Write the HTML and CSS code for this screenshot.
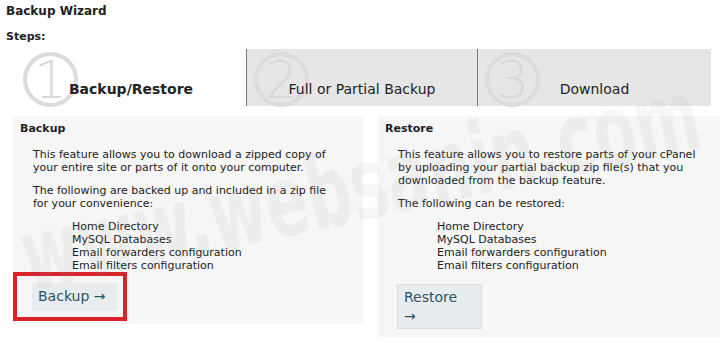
FILE: index.html
```html
<!DOCTYPE html>
<html lang="en">

<head>
    <meta charset="UTF-8">
    <meta name="viewport" content="width=device-width, initial-scale=1.0">
    <title>Backup Wizard</title>
    <link rel="stylesheet" href="styles.css">
</head>

<body>

    <h1 class="title">Backup Wizard</h1>
    <div class="steps-label">Steps:</div>

    <div class="tabs">
        <div class="tab active">
            <span class="num">1</span>
            <span class="tab-label">Backup/Restore</span>
        </div>
        <div class="tab">
            <span class="num">2</span>
            <span class="tab-label">Full or Partial Backup</span>
        </div>
        <div class="tab">
            <span class="num">3</span>
            <span class="tab-label">Download</span>
        </div>
    </div>

    <div class="panels">
        <div class="panel backup">
            <h2>Backup</h2>
            <p>This feature allows you to download a zipped copy of your entire site or parts of it onto your computer.</p>
            <p>The following are backed up and included in a zip file for your convenience:</p>
            <ul>
                <li>Home Directory</li>
                <li>MySQL Databases</li>
                <li>Email forwarders configuration</li>
                <li>Email filters configuration</li>
            </ul>
            <div class="highlight">
                <button class="btn">Backup &rarr;</button>
            </div>
        </div>

        <div class="panel restore">
            <h2>Restore</h2>
            <p>This feature allows you to restore parts of your cPanel by uploading your partial backup zip file(s) that you downloaded from the backup feature.</p>
            <p>The following can be restored:</p>
            <ul>
                <li>Home Directory</li>
                <li>MySQL Databases</li>
                <li>Email forwarders configuration</li>
                <li>Email filters configuration</li>
            </ul>
            <button class="btn narrow">Restore &rarr;</button>
        </div>
    </div>

    <div class="watermark">www.websanin.com</div>

</body>

</html>
```

FILE: styles.css
```css
body {
    margin: 0;
    padding: 3px 6px 0 6px;
    background: #fff;
    font-family: "DejaVu Sans", Verdana, sans-serif;
    font-size: 11px;
    color: #222;
    position: relative;
    overflow: hidden;
    height: 343px;
}

.title {
    font-size: 12px;
    font-weight: bold;
    margin: 0;
    line-height: 16px;
}

.steps-label {
    font-size: 11px;
    font-weight: bold;
    margin-top: 11px;
    line-height: 14px;
}

.tabs {
    display: flex;
    margin: 5px 9px 0 10px;
    height: 57px;
}

.tab {
    position: relative;
    flex: 0 0 231px;
    background: #e6e6e6;
    border-left: 1px solid #777;
    display: flex;
    align-items: flex-end;
    justify-content: center;
    padding-bottom: 9px;
    box-sizing: border-box;
}

.tab.active {
    flex-basis: 230px;
    background: #fff;
    border-left: none;
}

.tab:last-child {
    flex: 1;
}

.num {
    position: absolute;
    left: 7px;
    top: 3px;
    width: 47px;
    height: 47px;
    border: 4px solid #dcdcdc;
    border-radius: 50%;
    color: #d8d8d8;
    font-family: "DejaVu Sans", sans-serif;
    font-weight: 200;
    font-size: 52px;
    line-height: 48px;
    text-align: center;
}

.tab-label {
    position: relative;
    font-size: 14px;
    color: #222;
}

.tab.active .tab-label {
    font-weight: bold;
}

.panels {
    display: flex;
    gap: 15px;
    margin: 10px 0 0 7px;
    align-items: flex-start;
}

.panel {
    background: #f6f6f6;
    box-sizing: border-box;
}

.panel.backup {
    width: 350px;
    height: 208px;
    padding: 6px 7px 0 7px;
}

.panel.restore {
    width: 342px;
    height: 221px;
    padding: 6px 7px 0 7px;
}

.panel h2 {
    font-size: 11px;
    font-weight: bold;
    margin: 0 0 13px 0;
    line-height: 13px;
}

.panel p {
    margin: 0 0 10px 13px;
    max-width: 305px;
    line-height: 13px;
}

.panel ul {
    list-style: none;
    margin: 0 0 0 52px;
    padding: 0;
    line-height: 13px;
}

.panel p + ul {
    margin-top: 1px;
}

.highlight {
    display: inline-block;
    margin: 0 0 0 -7px;
    border: 4px solid #d8222c;
    padding: 7px 6px 6px 15px;
    background: #f6f6f6;
}

.btn {
    display: block;
    font-family: "DejaVu Sans", Verdana, sans-serif;
    font-size: 14px;
    color: #2b5566;
    background: #e9ecee;
    border: none;
    padding: 5px 6px 6px 6px;
    width: 85px;
    text-align: left;
    line-height: 17px;
}

.btn.narrow {
    margin: 12px 0 0 12px;
    width: 85px;
    height: 45px;
    padding: 3px 16px 3px 6px;
    border: 1px solid #ddd;
    line-height: 19px;
}

.watermark {
    position: absolute;
    left: 10px;
    top: 200px;
    font-family: "DejaVu Sans", sans-serif;
    font-weight: bold;
    font-size: 100px;
    color: rgba(150, 150, 150, 0.09);
    transform: rotate(-12deg) scaleX(0.62);
    transform-origin: left top;
    white-space: nowrap;
    pointer-events: none;
}
```
